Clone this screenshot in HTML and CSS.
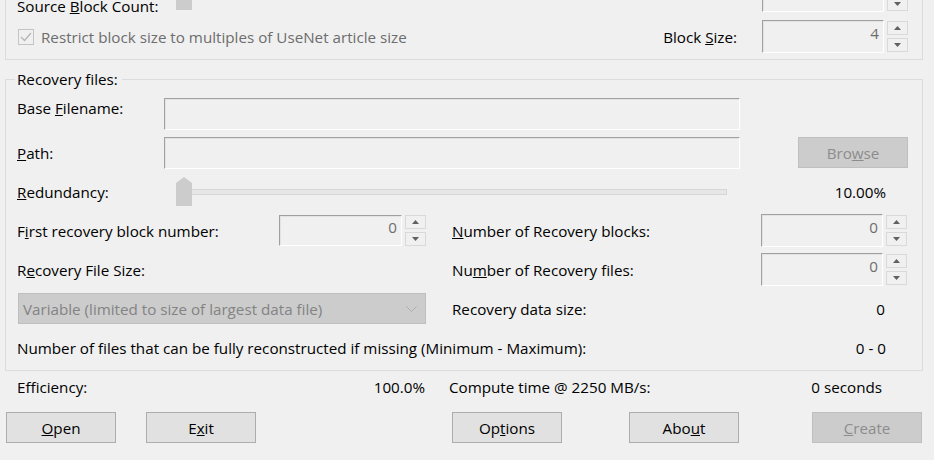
FILE: index.html
```html
<!DOCTYPE html>
<html lang="en">
<head>
  <meta charset="UTF-8">
  <title>Create Recovery Files</title>
  <link rel="stylesheet" href="styles.css">
</head>
<body>

  <div class="dialog">

    <!-- Source files (top part scrolled off) -->
    <fieldset class="group group-source">
      <div class="row">
        <span class="label label-wide label-clipped">Source <u>B</u>lock Count:</span>
        <div class="slider">
          <div class="slider-track"></div>
          <svg class="slider-thumb" width="16" height="29" viewBox="0 0 16 29"><path d="M0 6L8 0L16 6V29H0Z"/></svg>
        </div>
        <div class="spin spin-end">
          <div class="spin-box"></div>
          <div class="spin-btns">
            <span class="spin-btn"><svg width="7" height="4" viewBox="0 0 7 4"><path d="M0 4L3.5 0L7 4Z"/></svg></span>
            <span class="spin-btn"><svg width="7" height="4" viewBox="0 0 7 4"><path d="M0 0H7L3.5 4Z"/></svg></span>
          </div>
        </div>
      </div>
      <div class="row">
        <label class="check">
          <span class="check-box"><svg width="14" height="14" viewBox="0 0 14 14"><polyline points="2,7 5.5,10.5 12,3"/></svg></span>
          Restrict block size to multiples of UseNet article size
        </label>
        <span class="label label-block">Block <u>S</u>ize:</span>
        <div class="spin">
          <div class="spin-box">4</div>
          <div class="spin-btns">
            <span class="spin-btn"><svg width="7" height="4" viewBox="0 0 7 4"><path d="M0 4L3.5 0L7 4Z"/></svg></span>
            <span class="spin-btn"><svg width="7" height="4" viewBox="0 0 7 4"><path d="M0 0H7L3.5 4Z"/></svg></span>
          </div>
        </div>
      </div>
    </fieldset>

    <!-- Recovery files -->
    <fieldset class="group group-recovery">
      <legend>Recovery files:</legend>
      <div class="rows">
        <div class="row">
          <span class="label label-field label-top">Base <u>F</u>ilename:</span>
          <div class="textbox"></div>
        </div>
        <div class="row">
          <span class="label label-field"><u>P</u>ath:</span>
          <div class="textbox"></div>
          <button class="btn btn-disabled btn-browse" disabled>Bro<u>w</u>se</button>
        </div>
        <div class="row">
          <span class="label label-wide"><u>R</u>edundancy:</span>
          <div class="slider">
            <div class="slider-track"></div>
            <svg class="slider-thumb" width="16" height="29" viewBox="0 0 16 29"><path d="M0 6L8 0L16 6V29H0Z"/></svg>
          </div>
          <span class="value">10.00%</span>
        </div>
        <div class="row">
          <div class="half half-left">
            <span class="label">F<u>i</u>rst recovery block number:</span>
            <div class="spin spin-short">
              <div class="spin-box">0</div>
              <div class="spin-btns">
                <span class="spin-btn"><svg width="7" height="4" viewBox="0 0 7 4"><path d="M0 4L3.5 0L7 4Z"/></svg></span>
                <span class="spin-btn"><svg width="7" height="4" viewBox="0 0 7 4"><path d="M0 0H7L3.5 4Z"/></svg></span>
              </div>
            </div>
          </div>
          <div class="half half-right">
            <span class="label"><u>N</u>umber of Recovery blocks:</span>
            <div class="spin">
              <div class="spin-box">0</div>
              <div class="spin-btns">
                <span class="spin-btn"><svg width="7" height="4" viewBox="0 0 7 4"><path d="M0 4L3.5 0L7 4Z"/></svg></span>
                <span class="spin-btn"><svg width="7" height="4" viewBox="0 0 7 4"><path d="M0 0H7L3.5 4Z"/></svg></span>
              </div>
            </div>
          </div>
        </div>
        <div class="row">
          <div class="half half-left">
            <span class="label">R<u>e</u>covery File Size:</span>
          </div>
          <div class="half half-right">
            <span class="label">Nu<u>m</u>ber of Recovery files:</span>
            <div class="spin">
              <div class="spin-box">0</div>
              <div class="spin-btns">
                <span class="spin-btn"><svg width="7" height="4" viewBox="0 0 7 4"><path d="M0 4L3.5 0L7 4Z"/></svg></span>
                <span class="spin-btn"><svg width="7" height="4" viewBox="0 0 7 4"><path d="M0 0H7L3.5 4Z"/></svg></span>
              </div>
            </div>
          </div>
        </div>
        <div class="row">
          <div class="half half-left">
            <div class="combo">
              <span>Variable (limited to size of largest data file)</span>
              <svg width="11" height="6" viewBox="0 0 11 6"><polyline points="0.5,0.5 5.5,5.5 10.5,0.5"/></svg>
            </div>
          </div>
          <div class="half half-right">
            <span class="label">Recovery data size:</span>
            <span class="value">0</span>
          </div>
        </div>
        <div class="row">
          <span class="label">Number of files that can be fully reconstructed if missing (Minimum - Maximum):</span>
          <span class="value">0 - 0</span>
        </div>
      </div>
    </fieldset>

    <!-- Summary -->
    <div class="summary">
      <div class="summary-part summary-left">
        <span>Efficiency:</span>
        <span>100.0%</span>
      </div>
      <div class="summary-part summary-right">
        <span>Compute time @ 2250 MB/s:</span>
        <span>0 seconds</span>
      </div>
    </div>

    <div class="buttons">
      <button class="btn"><u>O</u>pen</button>
      <button class="btn btn-exit">E<u>x</u>it</button>
      <button class="btn btn-options">Op<u>t</u>ions</button>
      <button class="btn btn-about">Abo<u>u</u>t</button>
      <button class="btn btn-disabled btn-create" disabled><u>C</u>reate</button>
    </div>

  </div>

</body>
</html>
```

FILE: styles.css
```css
* {
  box-sizing: border-box;
}

html, body {
  margin: 0;
  height: 460px;
  overflow: hidden;
}

body {
  background: #f0f0f0;
  font-family: 'Open Sans', 'Noto Sans', sans-serif;
  font-size: 15.2px;
  line-height: 20px;
  color: #000;
}

.dialog {
  padding: 0 11px 0 5px;
}

/* Group boxes */
.group {
  margin: 0;
  min-width: 0;
  border: 1px solid #dcdcdc;
  padding: 0 14px 2px 11px;
}

.group-source {
  margin-top: -26px;
}

.group-source .row {
  height: 41px;
}

.group-recovery {
  margin-top: 9px;
  padding-top: 5px;
  padding-bottom: 3px;
}

legend {
  margin-left: -2px;
  padding: 0 4px 0 2px;
}

.rows {
  display: grid;
  grid-auto-rows: 39px;
}

.row {
  display: flex;
  align-items: center;
}

.label {
  white-space: nowrap;
}

.label-wide {
  width: 159px;
}

.label-field {
  width: 147px;
}

.label-clipped {
  margin-top: 20px;
}

.label-top {
  align-self: flex-start;
  margin-top: 4px;
}

.label-block {
  margin-left: auto;
  margin-right: 25px;
}

.value {
  margin-left: auto;
  padding-right: 22px;
}

.half {
  display: flex;
  align-items: center;
  height: 100%;
}

.half .label {
  flex: 1;
}

.half-left {
  width: 409px;
}

.half-right {
  width: 455px;
  margin-left: 26px;
}

/* Checkbox */
.check {
  display: flex;
  align-items: center;
  margin-left: 1px;
  color: #6d6d6d;
  white-space: nowrap;
}

.check-box {
  display: flex;
  width: 16px;
  height: 16px;
  margin-right: 7px;
  border: 1px solid #c4c4c4;
}

.check-box polyline {
  fill: none;
  stroke: #b4b4b4;
  stroke-width: 1.2;
}

/* Text boxes */
.textbox,
.spin-box {
  border: 1px solid;
  border-color: #a0a0a0 #fff #fff #a0a0a0;
  box-shadow: inset 1px 1px 0 #e3e3e3;
}

.textbox {
  width: 576px;
  height: 32px;
}

/* Spin boxes */
.spin {
  display: flex;
  gap: 3px;
  height: 33px;
}

.spin-end {
  margin-left: auto;
}

.spin-box {
  width: 122px;
  height: 100%;
  padding: 2px 4px 0 0;
  text-align: right;
  color: #6d6d6d;
}

.spin-short {
  height: 31px;
}

.spin-short .spin-box {
  width: 123px;
  padding-top: 1px;
}

.spin-btns {
  display: flex;
  flex-direction: column;
  justify-content: space-between;
  width: 21px;
  padding: 1px 0;
}

.spin-short .spin-btns {
  padding: 0;
}

.spin-btn {
  display: flex;
  align-items: center;
  justify-content: center;
  height: 14px;
  border: 1px solid #d9d9d9;
  fill: #606060;
}

/* Slider */
.slider {
  position: relative;
  display: flex;
  align-items: center;
  width: 551px;
  height: 29px;
}

.slider-track {
  width: 100%;
  height: 6px;
  border: 1px solid #d6d6d6;
  background: #e7e7e7;
}

.slider-thumb {
  position: absolute;
  left: 0;
  top: 0;
  fill: #cccccc;
}

/* Combo box */
.combo {
  display: flex;
  align-items: center;
  justify-content: space-between;
  width: 408px;
  height: 31px;
  margin-left: 1px;
  padding: 0 8px 0 4px;
  background: #cccccc;
  border: 1px solid #bfbfbf;
  color: #838383;
  white-space: nowrap;
}

.combo polyline {
  fill: none;
  stroke: #adadad;
  stroke-width: 1;
}

/* Buttons */
.btn {
  width: 110px;
  height: 31px;
  padding: 0;
  font: inherit;
  color: #000;
  background: #e1e1e1;
  border: 1px solid #adadad;
  border-radius: 0;
}

.btn-disabled {
  background: #cccccc;
  border-color: #bfbfbf;
  color: #8c8c8c;
}

.btn-browse {
  margin-left: auto;
}

/* Summary and bottom buttons */
.summary {
  display: flex;
  margin-top: 6px;
  padding-left: 12px;
}

.summary-part {
  display: flex;
  justify-content: space-between;
}

.summary-left {
  width: 408px;
}

.summary-right {
  width: 433px;
  margin-left: 24px;
}

.buttons {
  display: flex;
  margin-top: 15px;
  padding-left: 1px;
}

.btn-exit {
  margin-left: 30px;
}

.btn-options {
  margin-left: 196px;
}

.btn-about {
  margin-left: 67px;
}

.btn-create {
  margin-left: 73px;
}
```
